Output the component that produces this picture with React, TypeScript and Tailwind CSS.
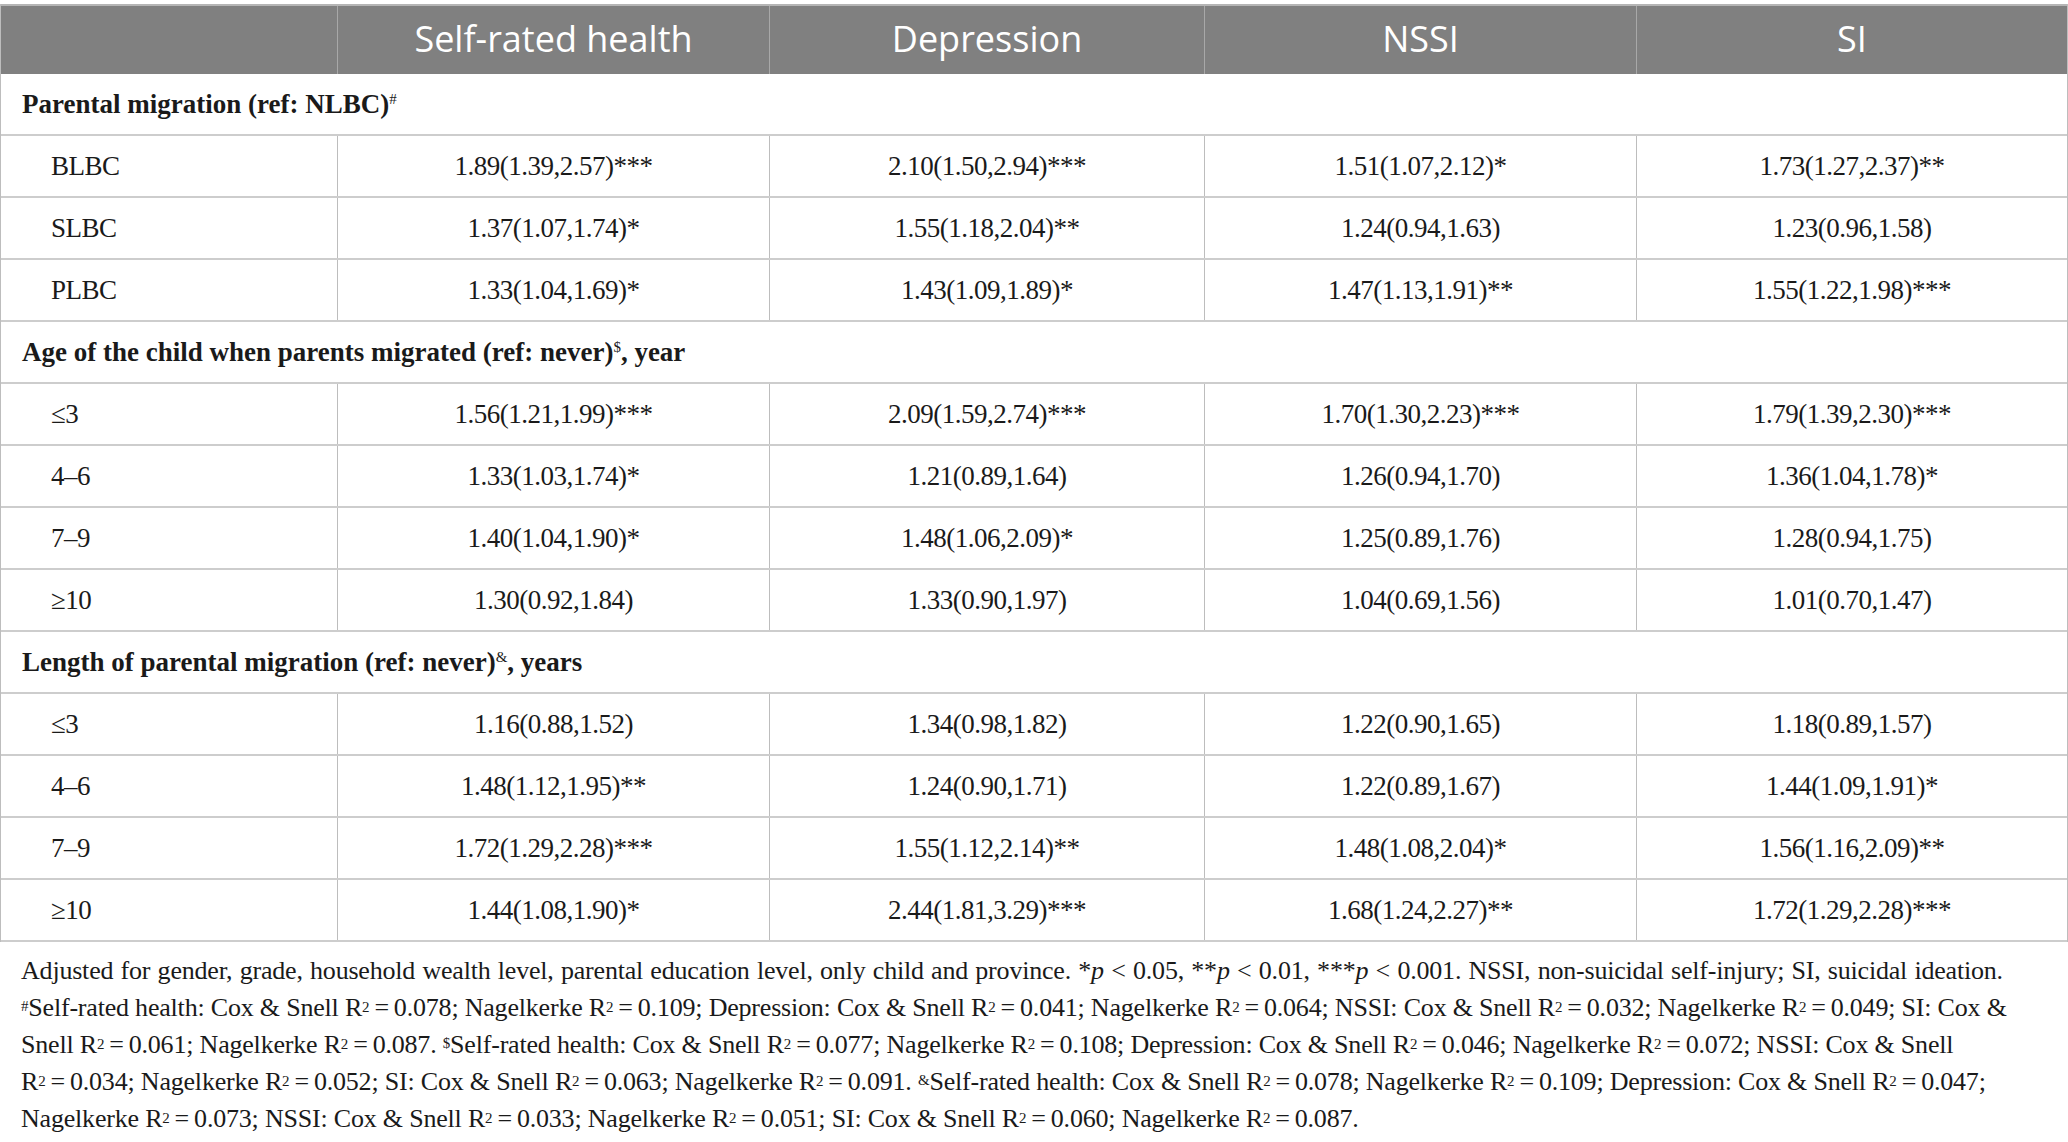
import React from 'react';

type Row = { label: string; values: string[] };
type Section = { title: string; mark: string; suffix?: string; rows: Row[] };

const sections: Section[] = [
  {
    title: 'Parental migration (ref: NLBC)',
    mark: '#',
    rows: [
      { label: 'BLBC', values: ['1.89(1.39,2.57)***', '2.10(1.50,2.94)***', '1.51(1.07,2.12)*', '1.73(1.27,2.37)**'] },
      { label: 'SLBC', values: ['1.37(1.07,1.74)*', '1.55(1.18,2.04)**', '1.24(0.94,1.63)', '1.23(0.96,1.58)'] },
      { label: 'PLBC', values: ['1.33(1.04,1.69)*', '1.43(1.09,1.89)*', '1.47(1.13,1.91)**', '1.55(1.22,1.98)***'] },
    ],
  },
  {
    title: 'Age of the child when parents migrated (ref: never)',
    mark: '$',
    suffix: ', year',
    rows: [
      { label: '≤3', values: ['1.56(1.21,1.99)***', '2.09(1.59,2.74)***', '1.70(1.30,2.23)***', '1.79(1.39,2.30)***'] },
      { label: '4–6', values: ['1.33(1.03,1.74)*', '1.21(0.89,1.64)', '1.26(0.94,1.70)', '1.36(1.04,1.78)*'] },
      { label: '7–9', values: ['1.40(1.04,1.90)*', '1.48(1.06,2.09)*', '1.25(0.89,1.76)', '1.28(0.94,1.75)'] },
      { label: '≥10', values: ['1.30(0.92,1.84)', '1.33(0.90,1.97)', '1.04(0.69,1.56)', '1.01(0.70,1.47)'] },
    ],
  },
  {
    title: 'Length of parental migration (ref: never)',
    mark: '&',
    suffix: ', years',
    rows: [
      { label: '≤3', values: ['1.16(0.88,1.52)', '1.34(0.98,1.82)', '1.22(0.90,1.65)', '1.18(0.89,1.57)'] },
      { label: '4–6', values: ['1.48(1.12,1.95)**', '1.24(0.90,1.71)', '1.22(0.89,1.67)', '1.44(1.09,1.91)*'] },
      { label: '7–9', values: ['1.72(1.29,2.28)***', '1.55(1.12,2.14)**', '1.48(1.08,2.04)*', '1.56(1.16,2.09)**'] },
      { label: '≥10', values: ['1.44(1.08,1.90)*', '2.44(1.81,3.29)***', '1.68(1.24,2.27)**', '1.72(1.29,2.28)***'] },
    ],
  },
];

const headers = ['Self-rated health', 'Depression', 'NSSI', 'SI'];

// R² = value, with the thin spacing used in the notes
const R2 = ({ v }: { v: string }) => (
  <>
    R<sup className="text-[15px] relative -top-[4px]">2</sup>
    {'\u2009'}={'\u2009'}
    {v}
  </>
);

const Mark = ({ c, size = 'text-[15px]' }: { c: string; size?: string }) => (
  <sup className={`${size} font-normal relative -top-[5px]`}>{c}</sup>
);

const P = ({ n }: { n: string }) => (
  <>
    <i>p</i> &lt; {n}
  </>
);

const App = () => {
  return (
    <div className="w-[2068px] h-[1142px] bg-white pt-[4px] font-['Liberation_Serif',serif] text-[#1a1a1a]">
      <div className="border-x border-[#bdbdbd]">
        {/* header */}
        <div className="grid grid-cols-[336px_432px_435px_432px_1fr] h-[70px] bg-[#808080] border-t-2 border-[#b5b5b5] font-['Open_Sans',sans-serif] text-white text-[36px]">
          <div></div>
          {headers.map((h) => (
            <div key={h} className="flex items-center justify-center border-l border-[#a8a8a8] pb-[2px]">
              {h}
            </div>
          ))}
        </div>

        {sections.map((s) => (
          <div key={s.title}>
            <div className="h-[62px] flex items-center pl-[21px] border-b-2 border-[#cdcdcd] text-[27px] font-bold">
              {s.title}
              <Mark c={s.mark} />
              {s.suffix && <span>{s.suffix}</span>}
            </div>
            {s.rows.map((r) => (
              <div
                key={s.title + r.label}
                className="grid grid-cols-[336px_432px_435px_432px_1fr] h-[62px] border-b-2 border-[#cdcdcd] text-[27px] tracking-[-0.5px]"
              >
                <div className="flex items-center pl-[50px]">{r.label}</div>
                {r.values.map((v, i) => (
                  <div key={i} className="flex items-center justify-center border-l border-[#bdbdbd]">
                    {v}
                  </div>
                ))}
              </div>
            ))}
          </div>
        ))}
      </div>

      {/* notes */}
      <div className="pl-[21px] pt-[10px] text-[26px] leading-[37px] tracking-[-0.2px] text-[#1a1a1a] whitespace-nowrap">
        <p>
          <span className="[word-spacing:1px]">
            Adjusted for gender, grade, household wealth level, parental education level, only child and province. *<P n="0.05" />, **<P n="0.01" />, ***<P n="0.001" />. NSSI, non-suicidal self-injury; SI, suicidal ideation.
          </span>
          <br />
          <Mark c="#" />Self-rated health: Cox &amp; Snell <R2 v="0.078" />; Nagelkerke <R2 v="0.109" />; Depression: Cox &amp; Snell <R2 v="0.041" />; Nagelkerke <R2 v="0.064" />; NSSI: Cox &amp; Snell <R2 v="0.032" />; Nagelkerke <R2 v="0.049" />; SI: Cox &amp;
          <br />
          Snell <R2 v="0.061" />; Nagelkerke <R2 v="0.087" />. <Mark c="$" />Self-rated health: Cox &amp; Snell <R2 v="0.077" />; Nagelkerke <R2 v="0.108" />; Depression: Cox &amp; Snell <R2 v="0.046" />; Nagelkerke <R2 v="0.072" />; NSSI: Cox &amp; Snell
          <br />
          <R2 v="0.034" />; Nagelkerke <R2 v="0.052" />; SI: Cox &amp; Snell <R2 v="0.063" />; Nagelkerke <R2 v="0.091" />. <Mark c="&" />Self-rated health: Cox &amp; Snell <R2 v="0.078" />; Nagelkerke <R2 v="0.109" />; Depression: Cox &amp; Snell <R2 v="0.047" />;
          <br />
          Nagelkerke <R2 v="0.073" />; NSSI: Cox &amp; Snell <R2 v="0.033" />; Nagelkerke <R2 v="0.051" />; SI: Cox &amp; Snell <R2 v="0.060" />; Nagelkerke <R2 v="0.087" />.
        </p>
      </div>
    </div>
  );
};

export default App;
